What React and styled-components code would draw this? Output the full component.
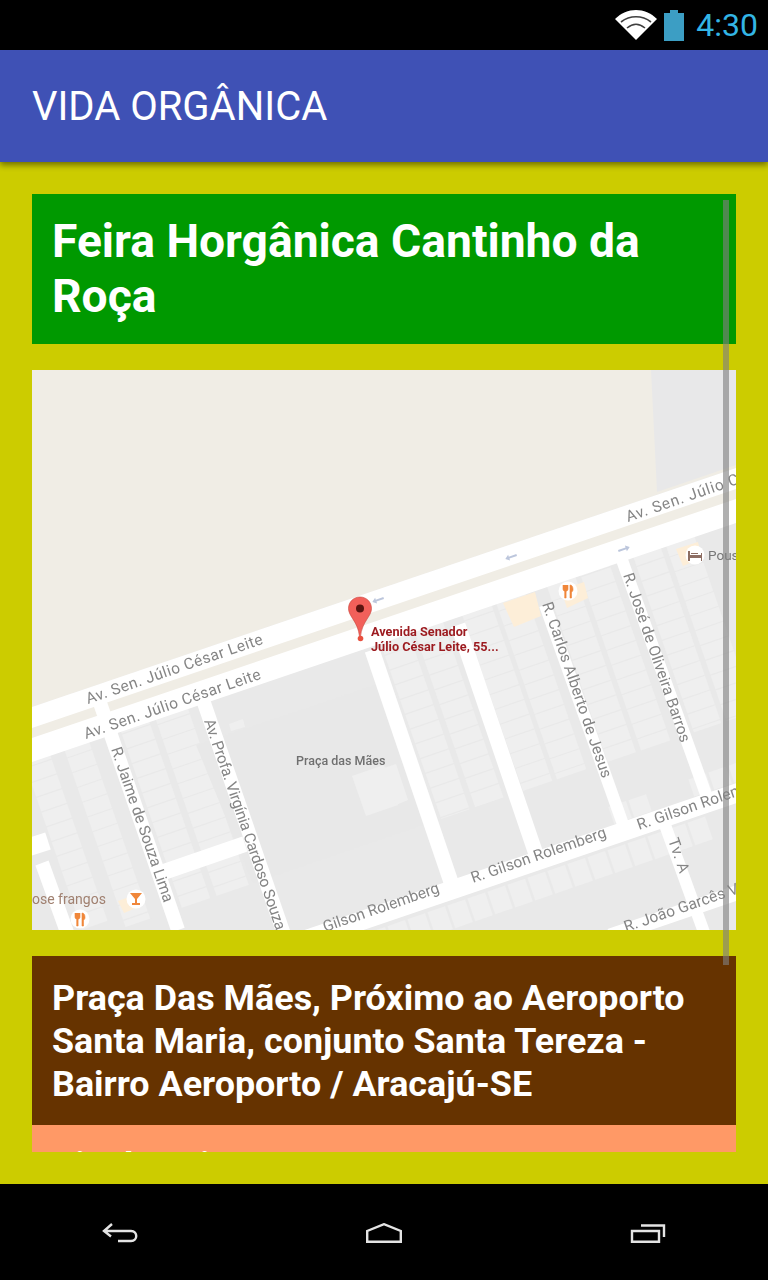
import React from 'react';
import styled, { createGlobalStyle } from 'styled-components';

const Global = createGlobalStyle`
  html, body { margin: 0; padding: 0; background: #000; }
  body { font-family: Roboto, "Noto Sans", sans-serif; }
  * { box-sizing: border-box; }
`;
const Screen = styled.div`width:768px;height:1280px;display:flex;flex-direction:column;overflow:hidden;background:#000;`;
const StatusBar = styled.div`height:50px;flex:none;background:#000;display:flex;align-items:center;justify-content:flex-end;padding-right:10px;`;
const Clock = styled.span`color:#33b5e5;font-size:32px;line-height:50px;margin-left:12px;`;
const AppBar = styled.header`height:112px;flex:none;background:#3f51b5;display:flex;align-items:center;padding:2px 32px 0;box-shadow:0 3px 6px rgba(0,0,0,.45);position:relative;z-index:1;`;
const AppTitle = styled.h1`margin:0;color:#fff;font-size:40px;font-weight:400;line-height:110px;`;
const Body = styled.main`flex:1;background:#cccc00;padding:32px;min-height:0;`;
const Scroller = styled.div`height:958px;overflow:hidden;position:relative;`;
const Title = styled.h2`margin:0;background:#009900;color:#fff;font-size:46.200px;font-weight:700;line-height:55px;padding:20px;height:150px;`;
const MapBox = styled.div`margin-top:26px;height:560px;background:#fff;overflow:hidden;`;
const MapSvg = styled.svg`display:block;width:704px;height:560px;filter:blur(.55px);`;
const Address = styled.div`margin-top:26px;background:#663300;color:#fff;font-size:35.900px;font-weight:700;line-height:43px;padding:21px 20px 18px;height:169px;`;
const Hours = styled.div`background:#ff9966;color:#fff;font-size:35.900px;font-weight:700;line-height:43px;padding:19.400px 20px;`;
const ScrollThumb = styled.div`position:absolute;top:6px;right:7px;width:6px;height:765px;background:rgba(128,128,128,.62);`;
const NavBar = styled.nav`height:96px;flex:none;background:#000;display:grid;grid-template-columns:240px 288px 240px;align-items:center;justify-items:center;padding-top:2px;`;

const lotColumns = [
  [17, 27], [61, 26], [126, 30], [167, 34], [416, 30], [454, 30],
  [508, 31], [546, 31], [602, 30], [640, 31], [698, 29], [735, 30],
];
const lots = [];
lotColumns.forEach(([x700, w], c) => {
  for (let i = 0; i < 28; i++) {
    const y = 520 + i * 15.6 * 0.946 + (c % 3) * 5;
    const x = x700 + 0.345 * (y - 700);
    lots.push(<rect key={`${c}-${i}`} x={-w / 2} y={-7.2} width={w} height={14.4} fill="#efefef" transform={`translate(${x} ${y}) rotate(-19)`} />);
  }
});
const southLots = [];
for (let i = 0; i < 34; i++) {
  const x = 40 + i * 20;
  const y = 925 - 0.345 * (x - 384) + 14;
  southLots.push(<rect key={i} x={-9.500} y={-11} width={18.600} height={24} fill="#efefef" transform={`translate(${x} ${y}) rotate(-19)`} />);
}
const farLots = [];
for (let i = 0; i < 8; i++) {
  const x = 620 + i * 20;
  const y = 925 - 0.345 * (x - 384) - 32;
  if (x < 660 || x > 685) farLots.push(<rect key={i} x={-9.500} y={-8} width={18.600} height={18} fill="#efefef" transform={`translate(${x} ${y}) rotate(-19)`} />);
}

const Street = ({ d, w = 14 }) => <path d={d} stroke="#fff" strokeWidth={w} fill="none" />;
const Label = ({ x, y, a, children, len, size = 15.500 }) => (
  <text transform={`translate(${x} ${y}) rotate(${a})`} fontFamily="Roboto, sans-serif" fontSize={size} fill="#858585" textLength={len} lengthAdjust="spacing">{children}</text>
);
const Poi = ({ x, y, kind }) => (
  <g transform={`translate(${x} ${y})`}>
    <circle r="9.500" fill="#fff" />
    {kind === 'food' && <path d="M-5-6v4c0 1.500 1 2 1.700 2.300V7h1.400V.3C-1 0 0-.5 0-2v-4M-3.100-6v3M2-6c2 0 3 2 3 4.500 0 1.500-.8 2.300-1.500 2.600V7H2z" fill="#f0873a" stroke="#f0873a" strokeWidth=".6" />}
    {kind === 'drink' && <path d="M-6-6H6L1 0v4h3v2h-8V4h3V0z" fill="#f0873a" />}
    {kind === 'hotel' && <path d="M-7-4h2v4H6V-2h1V6H6V3H-5v3h-2zM-4-2H3V-1H-4z" fill="#8d6e63" />}
  </g>
);
const Arrow = ({ x, y, flip }) => (
  <path transform={`translate(${x} ${y}) rotate(-19) scale(${flip ? -1 : 1} 1)`} d="M-6 0L-2-3V-1H6V1H-2V3z" fill="#bcc6dc" />
);

const StreetMap = () => (
  <MapSvg viewBox="32 370 704 560">
    <rect x="32" y="370" width="704" height="560" fill="#e9e9e9" />
    {lots}
    <path d="M32 370H736V468L32 707Z" fill="#f0ede5" />
    <path d="M651 370H736V465L657 492Z" fill="#e8e8e9" />
    <path d="M32 707L736 468V523L32 762Z" fill="#fff" />
    <path d="M32 728L736 489V499L32 738Z" fill="#f0ede5" />
    <path d="M196 745L380 683L450 890L280 950Z" fill="#e8e8e8" />
    <g fill="#efefef">
      <path d="M229 724L243 719L245 727L231 731Z" />
      <path d="M352 776L384 765L398 805L366 816Z" />
      <path d="M287 884L338 867L344 886L293 903Z" />
      <path d="M293 905L345 888L350 905L298 923Z" />
      <path d="M366 862L411 846L415 857L370 873Z" />
      <path d="M384 768L396 764L408 800L396 805Z" />
    </g>
    <path d="M0 970L800 696V1000H0Z" fill="#e9e9e9" />
    {southLots}
    {farLots}
    <g fill="#fdeed8">
      <path d="M503 603L535 592L541 616L514 627Z" />
      <path d="M561 590L584 582L588 598L567 608Z" />
      <path d="M676 549L698 542L702 558L683 566Z" />
      <path d="M118 901L132 896L136 908L124 913Z" />
    </g>
    <Street d="M99 700L178 930" />
    <Street d="M203 700L286 940" />
    <Street d="M372 650L452 885" w={15} />
    <Street d="M458 625L538 860" w={15} />
    <Street d="M545 605L625 830" w={12} />
    <Street d="M622 560L708 800" w={12} />
    <Street d="M665 825L705 935" w={12} />
    <Street d="M42 863L68 935" w={14} />
    <Street d="M20 850L48 841" w={18} />
    <Street d="M155 875L245 844" w={16} />
    <Street d="M290 945L760 785" w={19} />
    <Street d="M610 936L760 885" w={15} />
    <Arrow x={378} y={600} />
    <Arrow x={511} y={557} />
    <Arrow x={624} y={549} flip />
    <Label x={88} y={704} a={-19} len={186}>Av. Sen. Júlio César Leite</Label>
    <Label x={86} y={739} a={-19} len={186}>Av. Sen. Júlio César Leite</Label>
    <Label x={628} y={522} a={-19} len={118}>Av. Sen. Júlio C</Label>
    <Label x={111} y={749} a={71} len={163}>R. Jaime de Souza Lima</Label>
    <Label x={204} y={721} a={71} len={222}>Av. Profa. Virgínia Cardoso Souza</Label>
    <Label x={542} y={604} a={71} len={185}>R. Carlos Alberto de Jesus</Label>
    <Label x={623} y={575} a={71} len={178}>R. José de Oliveira Barros</Label>
    <Label x={325} y={932} a={-19} len={122}>Gilson Rolemberg</Label>
    <Label x={473} y={883} a={-19} len={142}>R. Gilson Rolemberg</Label>
    <Label x={639} y={830} a={-19} len={112}>R. Gilson Rolem</Label>
    <Label x={668} y={840} a={71} len={36}>Tv. A</Label>
    <Label x={626} y={932} a={-19} len={120}>R. João Garcês V</Label>
    <text x="296" y="765" fontFamily="Roboto, sans-serif" fontWeight="500" fontSize="12.500" fill="#6f6f6f">Praça das Mães</text>
    <text x="708" y="560" fontFamily="Roboto, sans-serif" fontSize="13.500" fill="#777">Pous</text>
    <text x="32" y="904" fontFamily="Roboto, sans-serif" fontSize="14" fill="#a08070">ose frangos</text>
    <Poi x={568} y={591} kind="food" />
    <Poi x={695} y={555} kind="hotel" />
    <Poi x={136} y={899} kind="drink" />
    <Poi x={80} y={919} kind="food" />
    <path d="M360 597c-6.500 0-11.500 5-11.500 11.500 0 8 9.500 13 11 28h1c1.500-15 11-20 11-28C371.500 602 366.500 597 360 597Z" fill="#f2605a" stroke="#c6443a" strokeWidth=".6" />
    <circle cx="360" cy="608.500" r="4" fill="#5a1410" />
    <circle cx="360.500" cy="638.500" r="2.800" fill="#e8503f" />
    <text x="371" y="636" fontFamily="Roboto, sans-serif" fontWeight="700" fontSize="12.700" fill="#9c1a1f">Avenida Senador</text>
    <text x="371" y="651" fontFamily="Roboto, sans-serif" fontWeight="700" fontSize="12.700" fill="#9c1a1f">Júlio César Leite, 55...</text>
  </MapSvg>
);

export default function App() {
  return (
    <Screen>
      <Global />
      <StatusBar>
        <svg width="42" height="30" viewBox="0 0 42 30">
          <path d="M21 30L0 9C12-3 30-3 42 9Z" fill="#fff" />
          <g fill="none" stroke="#000" strokeWidth="1.600" opacity=".75">
            <path d="M6 12C15 5 27 5 36 12" />
            <path d="M12 18C18 13 24 13 30 18" />
          </g>
        </svg>
        <svg width="20" height="31" viewBox="0 0 20 31" style={{ marginLeft: 7 }}>
          <path d="M0 3H6V0H14V3H20V31H0Z" fill="#3c9ec4" />
        </svg>
        <Clock>4:30</Clock>
      </StatusBar>
      <AppBar><AppTitle>VIDA ORGÂNICA</AppTitle></AppBar>
      <Body>
        <Scroller>
          <Title>Feira Horgânica Cantinho da Roça</Title>
          <MapBox><StreetMap /></MapBox>
          <Address>Praça Das Mães, Próximo ao Aeroporto Santa Maria, conjunto Santa Tereza - Bairro Aeroporto / Aracajú-SE</Address>
          <Hours>Dia da Feira:</Hours>
          <ScrollThumb />
        </Scroller>
      </Body>
      <NavBar>
        <svg width="36" height="20" viewBox="0 0 36 20" fill="none" stroke="#e4e4e4" strokeWidth="2.400">
          <path d="M10 1L2 8L9 13.500M2 8H29C36 8 36 18 29 18H16" />
        </svg>
        <svg width="36" height="20" viewBox="0 0 36 20" fill="none" stroke="#e4e4e4" strokeWidth="2.400">
          <path d="M1.200 18.800V8L18 1.200L34.800 8V18.800Z" />
        </svg>
        <svg width="36" height="20" viewBox="0 0 36 20" fill="none" stroke="#e4e4e4" strokeWidth="2.400">
          <path d="M2 8H29V18.800H2Z" />
          <path d="M11 2.500H34V14" />
        </svg>
      </NavBar>
    </Screen>
  );
}
